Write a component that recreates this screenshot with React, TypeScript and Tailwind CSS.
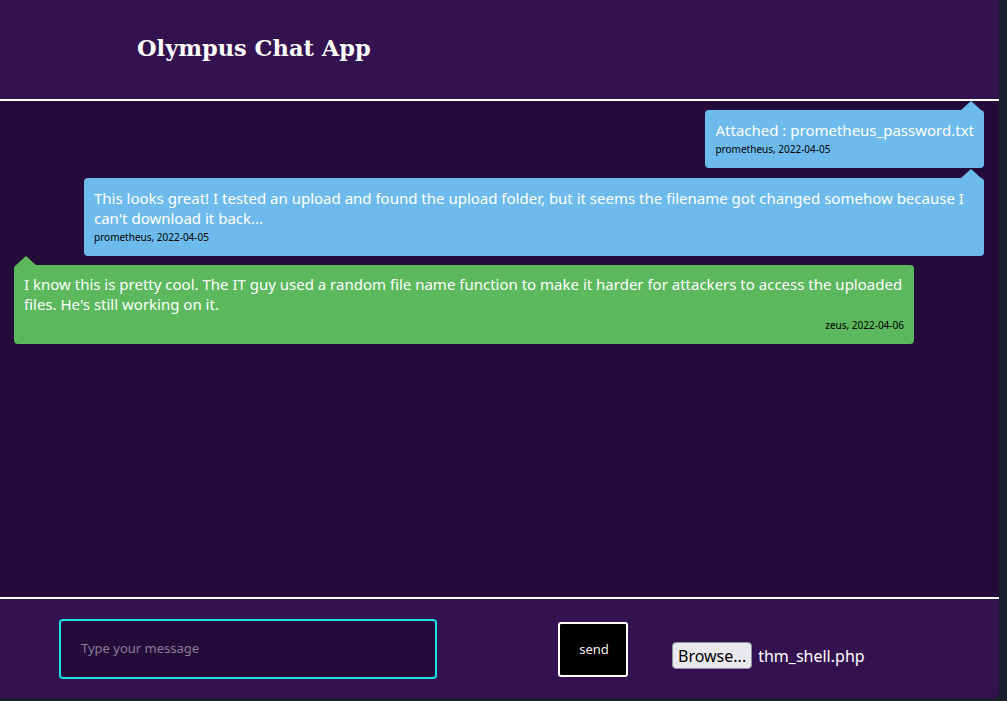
const SANS = { fontFamily: '"Noto Sans", "Open Sans", sans-serif' };

type Msg = { text: string; meta: string; mine: boolean };

const MESSAGES: Msg[] = [
  { text: "Attached : prometheus_password.txt", meta: "prometheus, 2022-04-05", mine: true },
  {
    text: "This looks great! I tested an upload and found the upload folder, but it seems the filename got changed somehow because I can't download it back...",
    meta: "prometheus, 2022-04-05",
    mine: true,
  },
  {
    text: "I know this is pretty cool. The IT guy used a random file name function to make it harder for attackers to access the uploaded files. He's still working on it.",
    meta: "zeus, 2022-04-06",
    mine: false,
  },
];

function Bubble({ m }: { m: Msg }) {
  return (
    <div className={`relative max-w-[900px] rounded-[4px] p-[10px] ${m.mine ? "self-end bg-[#6dbbec]" : "-mt-[1px] self-start bg-[#5cb85c] pt-[9px]"}`}>
      <span
        className={`absolute top-[-9px] h-0 w-0 border-x-[10px] border-b-[9px] border-x-transparent ${
          m.mine ? "right-[3px] border-b-[#6dbbec]" : "left-[2px] border-b-[#5cb85c]"
        }`}
      />
      <p className="text-[15px] leading-5 text-white">{m.text}</p>
      <p className={`text-[10px] leading-[18px] text-black ${m.mine ? "" : "mt-[2px] text-right"}`}>{m.meta}</p>
    </div>
  );
}

export default function App() {
  return (
    <div className="h-[701px] w-[1007px] bg-[#161f2a]" style={SANS}>
      <div className="flex h-[698px] w-[999px] flex-col overflow-hidden rounded-br-[6px]">
        <header className="flex h-[101px] shrink-0 items-center border-b-2 border-white bg-[#34124f] pl-[137px]">
          <h1
            className="pb-[1px] text-[22.5px] font-bold text-white"
            style={{ fontFamily: '"DejaVu Serif", "Liberation Serif", serif' }}
          >
            Olympus Chat App
          </h1>
        </header>

        <main className="flex flex-1 flex-col gap-[10px] bg-[#240b3a] px-[15px] pt-[9px] pl-[14px]">
          {MESSAGES.map((m, i) => (
            <Bubble key={i} m={m} />
          ))}
        </main>

        <footer className="flex h-[101px] shrink-0 items-start border-t-2 border-white bg-[#34124f] pl-[59px]">
          <div className="mt-[20px] flex h-[60px] w-[378px] items-center rounded-[4px] border-2 border-[#19e3e3] bg-[#240b3a] pl-[20px]">
            <span className="text-[13px] text-[#8c7d96]">Type your message</span>
          </div>
          <button
            type="button"
            className="ml-[121px] mt-[23px] flex h-[55px] w-[70px] items-center justify-center rounded-[3px] border-2 border-white bg-black pl-[2px] text-[13px] text-[#f3efe6]"
          >
            send
          </button>
          <div className="ml-[44px] mt-[43px] flex items-center gap-[6px] text-[16px]">
            <span className="flex h-[27px] items-center rounded-[4px] border border-[#8f8f9d] bg-[#e9e9ed] px-[5px] text-black">
              Browse...
            </span>
            <span className="text-white">thm_shell.php</span>
          </div>
        </footer>
      </div>
    </div>
  );
}
